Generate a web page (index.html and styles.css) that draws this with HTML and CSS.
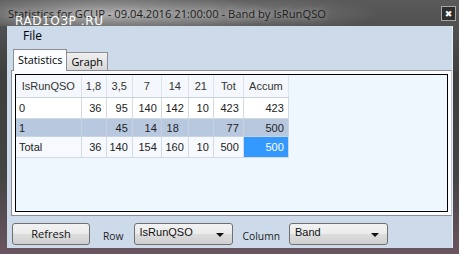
FILE: index.html
```html
<!DOCTYPE html>
<html lang="en">
<head>
  <meta charset="UTF-8">
  <title>Statistics for GCUP</title>
  <link rel="stylesheet" href="styles.css">
</head>
<body>
  <div class="window">
    <!-- Title bar -->
    <div class="titlebar">
      <span class="title">Statistics for GCUP - 09.04.2016 21:00:00 - Band by IsRunQSO</span>
      <span class="watermark">RAD1O3P .RU</span>
      <span class="close">&#x2716;</span>
    </div>

    <div class="client">
      <div class="menubar">
        <span class="menu-item">File</span>
      </div>

      <div class="tabs">
        <span class="tab active">Statistics</span>
        <span class="tab">Graph</span>
      </div>

      <div class="tab-page">
        <div class="grid">
          <table class="stats">
            <colgroup>
              <col class="c-name">
              <col class="c-18">
              <col class="c-35">
              <col class="c-7">
              <col class="c-14">
              <col class="c-21">
              <col class="c-tot">
              <col class="c-acc">
            </colgroup>
            <thead>
              <tr>
                <th>IsRunQSO</th><th>1,8</th><th>3,5</th><th>7</th><th>14</th><th>21</th><th>Tot</th><th>Accum</th>
              </tr>
            </thead>
            <tbody>
              <tr class="row-a">
                <td class="name">0</td><td>36</td><td>95</td><td>140</td><td>142</td><td>10</td><td>423</td><td>423</td>
              </tr>
              <tr class="row-sel">
                <td class="name">1</td><td></td><td>45</td><td>14</td><td class="nudge">18</td><td></td><td>77</td><td>500</td>
              </tr>
              <tr class="row-total">
                <td class="name">Total</td><td>36</td><td>140</td><td>154</td><td>160</td><td>10</td><td>500</td><td class="current">500</td>
              </tr>
            </tbody>
          </table>
        </div>
      </div>

      <!-- Bottom controls -->
      <div class="toolbar">
        <button class="btn">Refresh</button>
        <span class="label">Row</span>
        <div class="combo">IsRunQSO<span class="arrow"></span></div>
        <span class="label">Column</span>
        <div class="combo">Band<span class="arrow"></span></div>
      </div>
    </div>
  </div>
</body>
</html>
```

FILE: styles.css
```css
body {
  margin: 0;
  padding: 0;
  background-color: #3a3a3a;
  font-family: "Open Sans", "DejaVu Sans", sans-serif;
}
.window {
  width: 459px;
  height: 254px;
  box-sizing: border-box;
  padding: 0 6px 6px 7px;
  display: flex;
  flex-direction: column;
  background: linear-gradient(180deg, #5a5a5a 0%, #3e3e3e 30%, #444 70%, #6a5560 100%);
}
.titlebar {
  position: relative;
  height: 26px;
  flex-shrink: 0;
  background: radial-gradient(ellipse 170px 22px at 110px 14px, rgba(200, 200, 200, 0.75), rgba(200, 200, 200, 0) 100%),
    radial-gradient(ellipse 120px 18px at 260px 14px, rgba(150, 150, 150, 0.5), rgba(150, 150, 150, 0) 100%);
  margin: 0 -6px 0 -7px;
  padding-left: 8px;
}
.title {
  display: block;
  font-size: 11.2px;
  line-height: 28px;
  color: #1c1c1c;
  white-space: nowrap;
  text-shadow: 0 0 6px rgba(255, 255, 255, 0.6);
}
.watermark {
  position: absolute;
  left: 15px;
  top: 14px;
  font-family: "DejaVu Sans", sans-serif;
  font-size: 12px;
  line-height: 14px;
  letter-spacing: 0.6px;
  color: #fff;
}
.close {
  position: absolute;
  left: 441px;
  top: 6px;
  width: 13px;
  height: 13px;
  border: 1px solid #a8a8a8;
  background: #2e2e2e;
  color: #fff;
  font-size: 9px;
  line-height: 13px;
  text-align: center;
}
.client {
  flex: 1;
  display: flex;
  flex-direction: column;
  background-color: #ccdaea;
  border-right: 1px solid #e4ecf5;
}
.menubar {
  height: 20px;
  padding-left: 16px;
  font-size: 12px;
  line-height: 20px;
  color: #000;
}
.tabs {
  display: flex;
  align-items: flex-end;
  height: 23px;
  margin-top: 1px;
  padding-left: 6px;
}
.tab {
  font-size: 10.8px;
  height: 17px;
  line-height: 18px;
  padding: 0 4px;
  border: 1px solid #8c8e94;
  border-bottom: none;
  background: linear-gradient(180deg, #f0f0f0, #d8d8d8);
  color: #000;
}
.tab.active {
  height: 21px;
  line-height: 20px;
  padding: 0 4px 0 4px;
  background: #fafcff;
  position: relative;
  z-index: 1;
  margin-bottom: -1px;
}
.tab + .tab {
  border-left: none;
}
.tab-page {
  height: 146px;
  margin-left: 4px;
  border: 1px solid #8c8e94;
  border-right-color: #c0c6d0;
  background: #fafcff;
  padding: 3px;
  box-sizing: border-box;
}
.grid {
  height: 100%;
  box-sizing: border-box;
  border: 1px solid #000;
  background-color: #eef7fe;
}
.stats {
  border-collapse: collapse;
  font-family: "Liberation Sans", Arial, sans-serif;
  font-size: 11px;
  color: #222;
}
.c-name { width: 65px; }
.c-18 { width: 25px; }
.c-35 { width: 24px; }
.c-7 { width: 29px; }
.c-14 { width: 27px; }
.c-21 { width: 25px; }
.c-tot { width: 30px; }
.c-acc { width: 45px; }
.stats th {
  height: 22px;
  padding: 0;
  font-weight: normal;
  text-align: center;
  color: #333;
  background-color: #f4f8fc;
  border-right: 1px solid #dde3ea;
  border-bottom: 1px solid #c9d1db;
}
.stats td {
  height: 20px;
  padding: 0 4px 0 3px;
  text-align: right;
  border-right: 1px solid #d3dae3;
  border-bottom: 1px solid #d3dae3;
  background-color: #fff;
}
.stats td.name {
  text-align: left;
}
.stats .row-sel td {
  height: 17px;
  background-color: #b8c8de;
  border-color: #c7d3e3;
}
.stats td.nudge {
  padding-right: 9px;
}
.stats .row-total td {
  height: 20px;
  background-color: #f6f9fd;
}
.stats td.current {
  background-color: #3399ff;
  color: #fff;
}
.toolbar {
  flex: 1;
  display: flex;
  align-items: center;
  padding: 3px 0 0 5px;
}
.btn {
  width: 78px;
  height: 22px;
  font-family: "Open Sans", "DejaVu Sans", sans-serif;
  font-size: 11px;
  color: #111;
  border: 1px solid #707070;
  border-radius: 3px;
  background: linear-gradient(180deg, #f2f2f2 0%, #ebebeb 50%, #dddddd 51%, #cfcfcf 100%);
  padding: 0;
}
.label {
  font-size: 10.3px;
  color: #222;
  margin: 5px 10px 0 13px;
}
.combo + .label {
  margin: 5px 9px 0 10px;
}
.combo {
  position: relative;
  width: 92px;
  height: 20px;
  padding-left: 5px;
  font-family: "Liberation Sans", Arial, sans-serif;
  font-size: 11px;
  line-height: 17px;
  color: #111;
  border: 1px solid #707070;
  border-radius: 3px;
  background: linear-gradient(180deg, #f2f2f2 0%, #ebebeb 50%, #dddddd 51%, #cfcfcf 100%);
}
.arrow {
  position: absolute;
  right: 8px;
  top: 9px;
  width: 0;
  height: 0;
  border-left: 4px solid transparent;
  border-right: 4px solid transparent;
  border-top: 4px solid #111;
}
```
